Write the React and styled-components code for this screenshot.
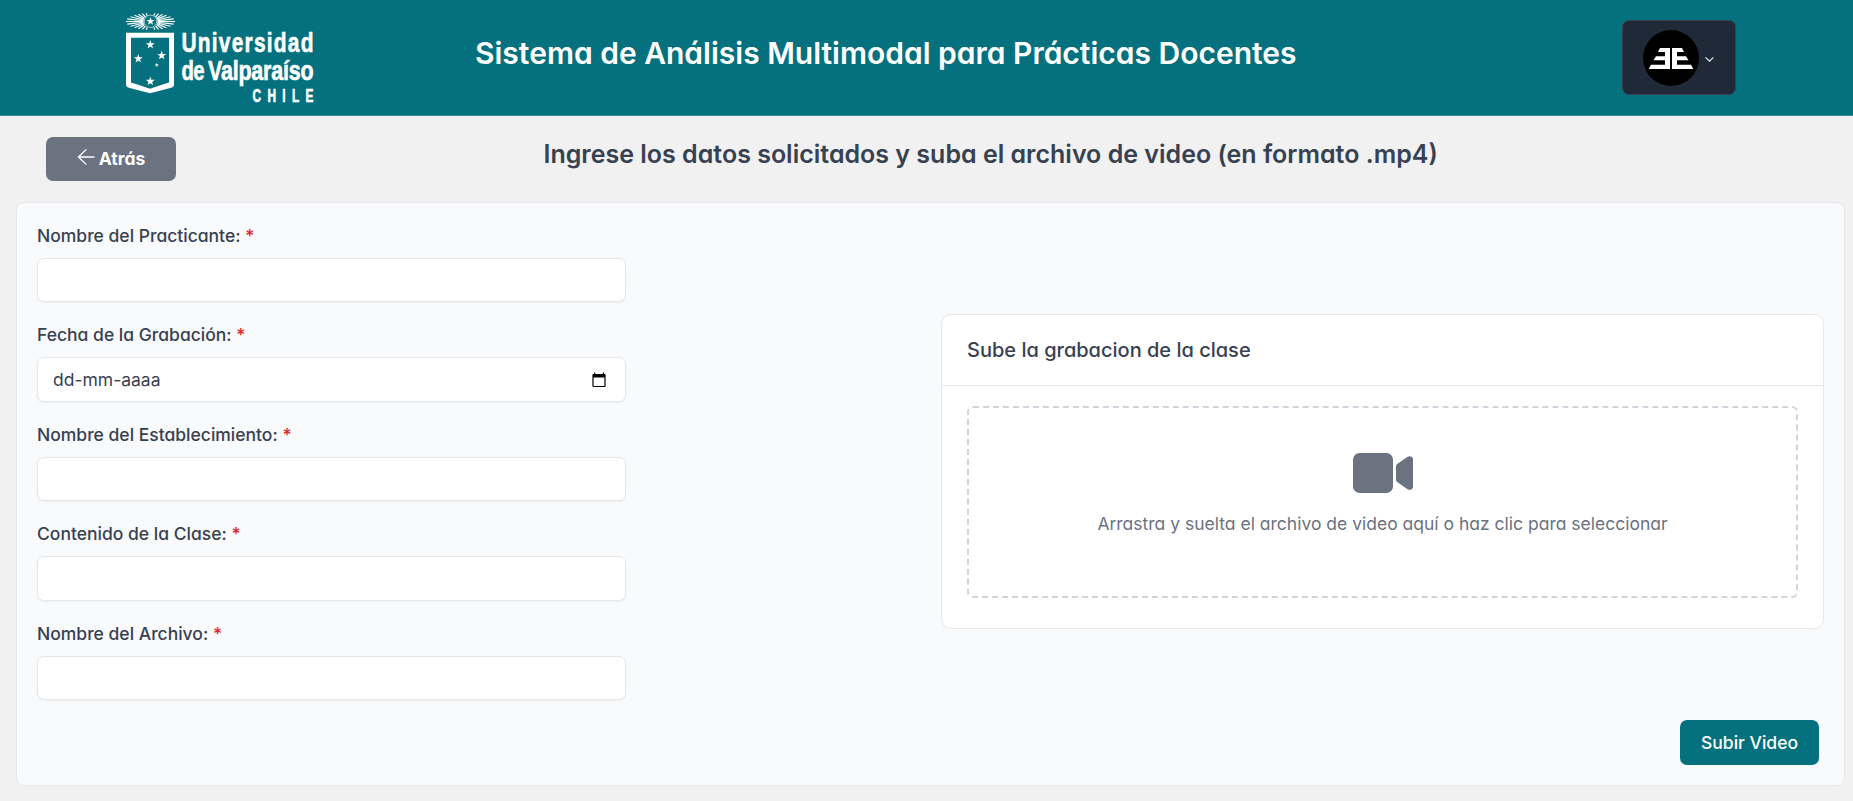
import React from "react";
import styled, { createGlobalStyle } from "styled-components";

const GlobalStyle = createGlobalStyle`
  *, *::before, *::after { box-sizing: border-box; }
  body {
    margin: 0;
    min-height: 100vh;
    background: #f1f1f1;
    color: #374151;
    font-family: Inter, "Liberation Sans", sans-serif;
    font-feature-settings: "cv11";
    font-size: 17.5px;
    line-height: 25px;
  }
  h1, h2, h3, p { margin: 0; }
  svg { display: block; }
  button, input { font: inherit; font-feature-settings: inherit; }
`;

const Header = styled.header`
  display: flex;
  align-items: flex-start;
  height: 116px;
  padding: 0 117px 0 125px;
  background: #05717e;
  border-bottom: 1px solid #3d8c97;
`;

const LogoLink = styled.a`
  display: block;
  width: 200px;
  height: 110px;
`;

const SiteTitle = styled.h1`
  margin: 34px 0 0 150px;
  color: #fff;
  font-size: 30px;
  line-height: 38px;
  font-weight: 600;
  white-space: nowrap;
`;

const UserMenu = styled.button`
  display: flex;
  align-items: center;
  gap: 5.5px;
  width: 114px;
  height: 75px;
  margin: 20px 0 0 auto;
  padding: 0 0 0 20px;
  background: #1f2937;
  border: 1px solid #374151;
  border-radius: 7px;
`;

const TitleBar = styled.div`
  display: flex;
  align-items: flex-start;
  height: 86px;
  padding: 21px 0 0 46px;
`;

const BackButton = styled.button`
  display: flex;
  align-items: center;
  justify-content: center;
  gap: 4px;
  width: 130px;
  height: 44px;
  padding: 0 0 2px;
  border: 0;
  border-radius: 7px;
  background: #6b7280;
  color: #fff;
  font-weight: 700;
`;

const PageTitle = styled.h2`
  margin: 1px 0 0 367.5px;
  font-size: 25px;
  line-height: 32px;
  font-weight: 600;
  white-space: nowrap;
`;

const Panel = styled.main`
  display: flex;
  justify-content: space-between;
  height: 584px;
  margin: 0 8px 0 16px;
  padding: 20px;
  background: #f9fafc;
  border: 1px solid #e5e7eb;
  border-radius: 8px;
`;

const Fields = styled.form`
  display: flex;
  flex-direction: column;
  gap: 20.15px;
  width: 589px;
`;

const Field = styled.label`
  display: flex;
  flex-direction: column;
  gap: 10px;
`;

const Label = styled.span`
  line-height: 25px;
  font-weight: 500;
`;

const Required = styled.span`
  color: #e02424;
`;

const Control = styled.span`
  display: flex;
  align-items: center;
  justify-content: space-between;
  height: 44.3px;
  padding: 0 19px 0 15px;
  background: #fff;
  border: 1px solid #e5e7eb;
  border-radius: 7px;
  box-shadow: 0 1px 2px rgba(0, 0, 0, 0.05);
  font-feature-settings: normal;
`;

const TextInput = styled.input`
  width: 100%;
  border: 0;
  outline: 0;
  background: transparent;
`;

const UploadColumn = styled.section`
  display: flex;
  flex-direction: column;
  align-items: flex-end;
  width: 883px;
  padding-top: 91px;
`;

const UploadCard = styled.div`
  width: 100%;
  height: 315px;
  background: #fff;
  border: 1px solid #e5e7eb;
  border-radius: 10px;
`;

const CardTitle = styled.h3`
  height: 71px;
  padding: 22px 25px;
  border-bottom: 1px solid #e5e7eb;
  font-size: 20px;
  line-height: 27px;
  font-weight: 500;
`;

const DropZone = styled.div`
  display: flex;
  flex-direction: column;
  align-items: center;
  gap: 18px;
  height: 192px;
  margin: 20px 25px 0;
  padding-top: 45px;
  border: 2px dashed #d1d5db;
  border-radius: 6px;
  color: #6b7280;
`;

const SubmitButton = styled.button`
  width: 139px;
  height: 45px;
  margin: 91px 5px 0 0;
  padding: 0;
  border: 0;
  border-radius: 7px;
  background: #05717e;
  color: #fff;
  font-weight: 500;
`;

const FIELDS = [
  { label: "Nombre del Practicante:" },
  { label: "Fecha de la Grabación:", date: true },
  { label: "Nombre del Establecimiento:" },
  { label: "Contenido de la Clase:" },
  { label: "Nombre del Archivo:" },
];

const STARS = [
  [150.3, 44.7, 4.7],
  [138.3, 58.7, 4.7],
  [161.7, 55.5, 4.7],
  [156.7, 65, 2.2],
  [150.3, 81.3, 4.7],
  [150.5, 21.3, 4.4],
];

function starPoints(cx, cy, r) {
  return Array.from({ length: 10 }, (_, i) => {
    const a = -Math.PI / 2 + (i * Math.PI) / 5;
    const d = i % 2 ? r * 0.4 : r;
    return `${cx + d * Math.cos(a)},${cy + d * Math.sin(a)}`;
  }).join(" ");
}

// Feathers of the two wings: each widens from the medallion to a tip on an ellipse.
const FEATHERS = [-62, -44, -31, -21.5, -13.5, -6.5, 0, 6.5, 13.5, 21.5, 31, 44, 62].flatMap((deg) => {
  const a = (deg * Math.PI) / 180;
  const r = 1 / Math.sqrt((Math.cos(a) / 24.5) ** 2 + (Math.sin(a) / 8.3) ** 2);
  return [1, -1].map((side) => ({
    x1: 150.5 + side * 7 * Math.cos(a),
    y1: 21.5 + 6.5 * Math.sin(a),
    x2: 150.5 + side * r * Math.cos(a),
    y2: 21.5 + r * Math.sin(a),
  }));
});

// Wordmark lines: x, baseline, drawn width, font size and horizontal condensing.
const WORDS = [
  { text: "Universidad", x: 181.5, y: 52, width: 132, size: 27.5, squeeze: 0.76 },
  { text: "de", x: 181.5, y: 80.3, width: 23, size: 27.5, squeeze: 0.74 },
  { text: "Valparaíso", x: 208, y: 80.3, width: 105.5, size: 27.5, squeeze: 0.78 },
  { text: "CHILE", x: 252.5, y: 101.6, width: 61, size: 17.5, squeeze: 0.68 },
];

function UniversityLogo() {
  return (
    <svg width="200" height="110" viewBox="125 0 200 110" fill="#fff" role="img">
      <g stroke="#fff" strokeWidth="1.15">
        {FEATHERS.map((f, i) => (
          <line key={i} {...f} />
        ))}
      </g>
      <circle cx="150.5" cy="21.3" r="6.2" fill="#05717e" stroke="#fff" strokeWidth="0.6" />
      <path
        fillRule="evenodd"
        d="M126 32.7H174V84.5Q174 86.6 172 87.4Q160 90.6 150 93.3Q140 90.6 128 87.4Q126 86.6 126 84.5ZM131 37.8V82.6Q140 85.4 150 88.8Q160 85.4 169 82.6V37.8Z"
      />
      {STARS.map(([x, y, r]) => (
        <polygon key={`${x}-${y}`} points={starPoints(x, y, r)} />
      ))}
      <g
        fontFamily="'Liberation Sans', sans-serif"
        fontWeight="700"
        stroke="#fff"
        strokeWidth="0.6"
      >
        {WORDS.map(({ text, x, y, width, size, squeeze }) => (
          <text
            key={text}
            transform={`translate(${x} ${y}) scale(${squeeze} 1)`}
            fontSize={size}
            textLength={width / squeeze}
            lengthAdjust="spacing"
          >
            {text}
          </text>
        ))}
      </g>
    </svg>
  );
}

function Avatar() {
  return (
    <svg width="56" height="56" viewBox="1643 30 56 56">
      <circle cx="1671" cy="58" r="28" fill="#000" />
      <g fill="#fff">
        <rect x="1665" y="48" width="5" height="21" />
        <rect x="1672" y="48" width="5" height="21" />
        <path d="M1660 48H1670V52H1658ZM1656 56.3H1670V60.3H1653.5ZM1651 64.7H1670V69H1648.8Z" />
        <path d="M1672 48H1682L1684 52H1672ZM1672 56.3H1686L1688.5 60.3H1672ZM1672 64.7H1691L1693.2 69H1672Z" />
      </g>
    </svg>
  );
}

function ChevronIcon() {
  return (
    <svg width="9" height="9" viewBox="0 0 9 9" fill="none" stroke="#e5e7eb" strokeWidth="1.2">
      <path d="M0.6 4.3L4.5 8.2L8.4 4.3" />
    </svg>
  );
}

function ArrowIcon() {
  return (
    <svg width="18" height="18" viewBox="0 0 18 18" fill="none" stroke="#fff" strokeWidth="1.3">
      <path d="M17.5 8H1.4M9.4 0.4L1.4 8L9.4 15.6" />
    </svg>
  );
}

function CalendarIcon() {
  return (
    <svg width="14" height="16" viewBox="0 0 14 16">
      <path
        fillRule="evenodd"
        d="M2 0.5H3.2V2H10.8V0.5H12V2H12.5Q13.6 2 13.6 3.1V13.9Q13.6 15 12.5 15H1.5Q0.4 15 0.4 13.9V3.1Q0.4 2 1.5 2H2ZM1.6 5.5V13.9H12.4V5.5Z"
      />
    </svg>
  );
}

function VideoIcon() {
  return (
    <svg width="60" height="40" viewBox="0 0 60 40" fill="#6b7280">
      <rect width="40" height="40" rx="6.6" />
      <path d="M43 13.2Q43 11.8 44.2 10.9L54.2 4Q57 2.3 59 4Q60 5 60 6.2V33.8Q60 35 59 36Q57 37.7 54.2 36L44.2 29.1Q43 28.2 43 26.8Z" />
    </svg>
  );
}

export default function App() {
  return (
    <>
      <GlobalStyle />
      <Header>
        <LogoLink>
          <UniversityLogo />
        </LogoLink>
        <SiteTitle>Sistema de Análisis Multimodal para Prácticas Docentes</SiteTitle>
        <UserMenu>
          <Avatar />
          <ChevronIcon />
        </UserMenu>
      </Header>
      <TitleBar>
        <BackButton>
          <ArrowIcon />
          Atrás
        </BackButton>
        <PageTitle>Ingrese los datos solicitados y suba el archivo de video (en formato .mp4)</PageTitle>
      </TitleBar>
      <Panel>
        <Fields>
          {FIELDS.map(({ label, date }) => (
            <Field key={label}>
              <Label>
                {label} <Required>*</Required>
              </Label>
              <Control>
                {date ? (
                  <>
                    <span>dd-mm-aaaa</span>
                    <CalendarIcon />
                  </>
                ) : (
                  <TextInput type="text" />
                )}
              </Control>
            </Field>
          ))}
        </Fields>
        <UploadColumn>
          <UploadCard>
            <CardTitle>Sube la grabacion de la clase</CardTitle>
            <DropZone>
              <VideoIcon />
              <p>Arrastra y suelta el archivo de video aquí o haz clic para seleccionar</p>
            </DropZone>
          </UploadCard>
          <SubmitButton>Subir Video</SubmitButton>
        </UploadColumn>
      </Panel>
    </>
  );
}
